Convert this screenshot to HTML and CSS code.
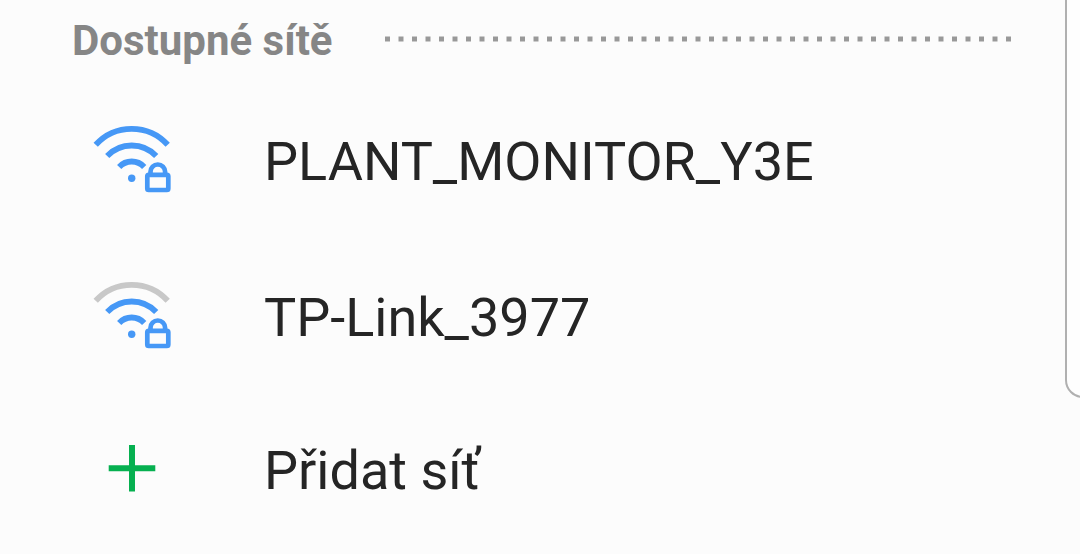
FILE: index.html
```html
<!DOCTYPE html>
<html lang="cs">
<head>
<meta charset="utf-8">
<meta name="viewport" content="width=device-width, initial-scale=1">
<title>Wi-Fi</title>
<link rel="stylesheet" href="styles.css">
</head>
<body>
<main class="networks">
  <header class="section-header">
    <h1 class="section-title">Dostupné sítě</h1>
    <svg class="divider" aria-hidden="true"><line x1="0" y1="3" x2="100%" y2="3"/></svg>
  </header>
  <ul class="network-list">
    <li>
      <button class="network" type="button">
        <svg class="icon" viewBox="0 0 80 80" aria-hidden="true">
          <path class="wave" d="M3.7 22.8a48.5 48.5 0 0 1 72 0"/>
          <path class="wave" d="M15.2 34a33.8 33.8 0 0 1 49 0"/>
          <path class="wave" d="M27.2 45a17 17 0 0 1 25 0"/>
          <circle class="dot" cx="39.7" cy="56.3" r="3.7"/>
          <path class="lock" d="M58.5 52v-2.2a7.3 7.3 0 0 1 14.6 0V52"/>
          <rect class="lock" x="55.3" y="52.8" width="21" height="15.2" rx="1.5"/>
        </svg>
        <span class="name">PLANT_MONITOR_Y3E</span>
      </button>
    </li>
    <li>
      <button class="network" type="button">
        <svg class="icon" viewBox="0 0 80 80" aria-hidden="true">
          <path class="wave wave-off" d="M3.7 22.8a48.5 48.5 0 0 1 72 0"/>
          <path class="wave" d="M15.2 34a33.8 33.8 0 0 1 49 0"/>
          <path class="wave" d="M27.2 45a17 17 0 0 1 25 0"/>
          <circle class="dot" cx="39.7" cy="56.3" r="3.7"/>
          <path class="lock" d="M58.5 52v-2.2a7.3 7.3 0 0 1 14.6 0V52"/>
          <rect class="lock" x="55.3" y="52.8" width="21" height="15.2" rx="1.5"/>
        </svg>
        <span class="name">TP-Link_3977</span>
      </button>
    </li>
    <li>
      <button class="network network-add" type="button">
        <svg class="icon" viewBox="0 0 80 80" aria-hidden="true">
          <path class="plus" d="M16.7 37.3h46.6M40 14v46.6"/>
        </svg>
        <span class="name">Přidat síť</span>
      </button>
    </li>
  </ul>
</main>
<div class="edge-panel" aria-hidden="true"></div>
</body>
</html>
```
FILE: styles.css
```css
*,
*::before {
  box-sizing: border-box;
}

body {
  position: relative;
  margin: 0;
  overflow-x: hidden;
  background: #fcfcfc;
  color: #252525;
  font-family: Roboto, "Noto Sans", sans-serif;
}

.section-header {
  display: flex;
  align-items: center;
  gap: 52px;
  padding: 16px 67px 18px 72px;
}

.section-title {
  margin: 0;
  color: #868686;
  font-size: 42px;
  font-weight: 700;
  line-height: 50px;
}

.divider {
  flex: 1;
  min-width: 0;
  height: 10px;
}

.divider line {
  stroke: #999;
  stroke-width: 5;
  stroke-dasharray: 5 8.5;
}

.network-list {
  margin: 0;
  padding: 0;
  list-style: none;
}

.network {
  display: flex;
  align-items: center;
  gap: 92px;
  width: 100%;
  padding: 46px 72px 46px 92px;
  border: 0;
  background: none;
  color: inherit;
  font: inherit;
  font-size: 54px;
  line-height: 64px;
  text-align: left;
}

.network-add {
  padding-top: 43px;
  padding-bottom: 43px;
}

.icon {
  flex: none;
  width: 80px;
  height: 80px;
  margin: -8px 0;
  fill: none;
  stroke: #4698f6;
}

.wave {
  stroke-width: 5.8;
}

.wave-off {
  stroke: #c8c8c8;
}

.dot {
  fill: #4698f6;
  stroke: none;
}

.lock {
  stroke-width: 4.7;
}

.plus {
  stroke: #06b050;
  stroke-width: 6;
}

.edge-panel {
  position: absolute;
  top: 0;
  right: 0;
  width: 15px;
  height: 398px;
  overflow: hidden;
}

.edge-panel::before {
  content: "";
  display: block;
  width: 60px;
  height: 438px;
  margin-top: -40px;
  border: 2px solid #b0b0b0;
  border-radius: 18px;
  background: #fefefe;
}
```
